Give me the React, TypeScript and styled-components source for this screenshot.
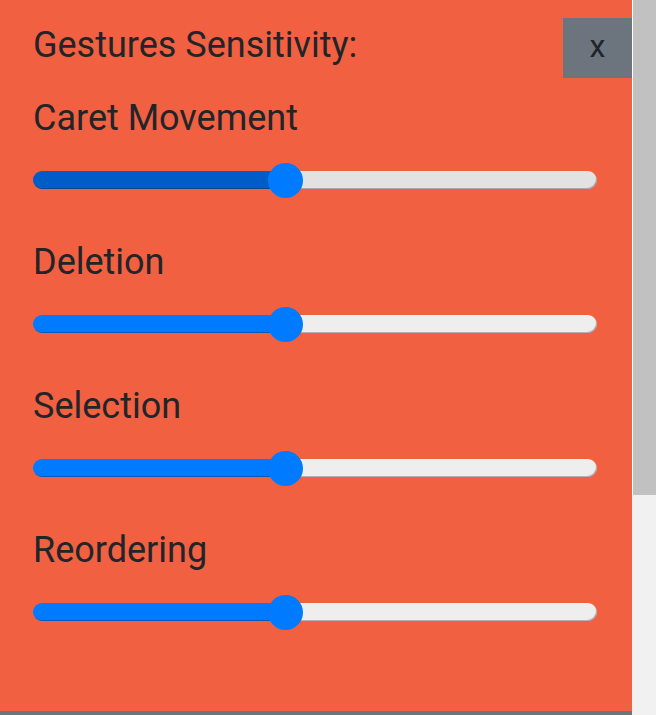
import React, { FC } from 'react';
import styled, { createGlobalStyle } from 'styled-components';

type Gesture = {
  label: string;
  value: number;
  active?: boolean;
};

const gestures: Gesture[] = [
  { label: 'Caret Movement', value: 44.5, active: true },
  { label: 'Deletion', value: 44.5 },
  { label: 'Selection', value: 44.5 },
  { label: 'Reordering', value: 44.5 },
];

// scroll position shown by the side bar: visible part of a ~1033px page
const viewport = 715;
const pageHeight = 1033;

const GlobalStyle = createGlobalStyle`
  body {
    margin: 0;
    font-family: Roboto, 'Noto Sans', sans-serif;
    color: #212529;
    overflow: hidden;
  }
`;

const GestureSlider: FC<{ gesture: Gesture }> = ({ gesture }) => {
  // gradient stop under the thumb centre (track 564px, thumb 35px)
  const fill = (17.5 + 529 * (gesture.value / 100)) / 564 * 100;
  return (
    <Setting>
      <Label>{gesture.label}</Label>
      <Range
        type="range"
        min={0}
        max={100}
        step={0.5}
        defaultValue={gesture.value}
        $active={gesture.active}
        style={{ ['--fill' as string]: `${fill}%` }}
      />
    </Setting>
  );
};

export default function App() {
  return (
    <>
      <GlobalStyle />
      <Page>
        <Main>
          <Panel>
            <Header>
              <Title>Gestures Sensitivity:</Title>
              <CloseButton type="button">x</CloseButton>
            </Header>
            {gestures.map((g) => (
              <GestureSlider key={g.label} gesture={g} />
            ))}
          </Panel>
          <Footer />
        </Main>
        <ScrollTrack>
          <ScrollThumb style={{ height: (viewport * viewport) / pageHeight }} />
        </ScrollTrack>
      </Page>
    </>
  );
}

const Page = styled.div`
  display: flex;
  height: 715px;
  overflow: hidden;
`;

const Main = styled.div`
  flex: 1;
  display: flex;
  flex-direction: column;
`;

const Panel = styled.div`
  height: 711px;
  flex-shrink: 0;
  box-sizing: border-box;
  background: #f06041;
  padding: 18px 0 0 33px;
  display: flex;
  flex-direction: column;
`;

const Footer = styled.div`
  flex: 1;
  background: #6c757d;
`;

const ScrollTrack = styled.div`
  width: 24px;
  flex-shrink: 0;
  background: #f1f1f1;
`;

const ScrollThumb = styled.div`
  box-sizing: border-box;
  background: #c1c1c1;
  border-left: 1px solid #ffffff;
`;

const Header = styled.div`
  display: flex;
  justify-content: space-between;
  align-items: flex-start;
  margin-bottom: 19px;
`;

const Title = styled.div`
  font-size: 36px;
  line-height: 43px;
  margin-top: 6px;
`;

const CloseButton = styled.button`
  width: 69px;
  height: 60px;
  border: none;
  border-radius: 0;
  background: #6c757d;
  color: #212529;
  font-family: Roboto, 'Noto Sans', sans-serif;
  font-size: 32px;
  padding: 0 0 4px;
  cursor: pointer;
`;

const Setting = styled.div`
  display: flex;
  flex-direction: column;
  width: 564px;
  margin-bottom: 44px;
`;

const Label = styled.div`
  font-size: 36px;
  line-height: 43px;
  margin-bottom: 23px;
`;

const Range = styled.input<{ $active?: boolean }>`
  -webkit-appearance: none;
  appearance: none;
  width: 564px;
  height: 34px;
  margin: 0;
  padding: 0;
  background: transparent;
  outline: none;

  &::-webkit-slider-runnable-track {
    height: 18px;
    border-radius: 9px;
    box-sizing: border-box;
    background: linear-gradient(
      to right,
      ${(p) => (p.$active ? '#005dc8' : '#007bff')} 0,
      ${(p) => (p.$active ? '#005dc8' : '#007bff')} var(--fill),
      ${(p) => (p.$active ? '#e2e2e2' : '#eeeeee')} var(--fill)
    );
    box-shadow: inset -1px -1px 0 rgba(0, 0, 0, 0.25);
  }

  &::-webkit-slider-thumb {
    -webkit-appearance: none;
    appearance: none;
    width: 35px;
    height: 35px;
    margin-top: -8.5px;
    border-radius: 50%;
    border: none;
    background: #007bff;
    cursor: pointer;
  }
`;
